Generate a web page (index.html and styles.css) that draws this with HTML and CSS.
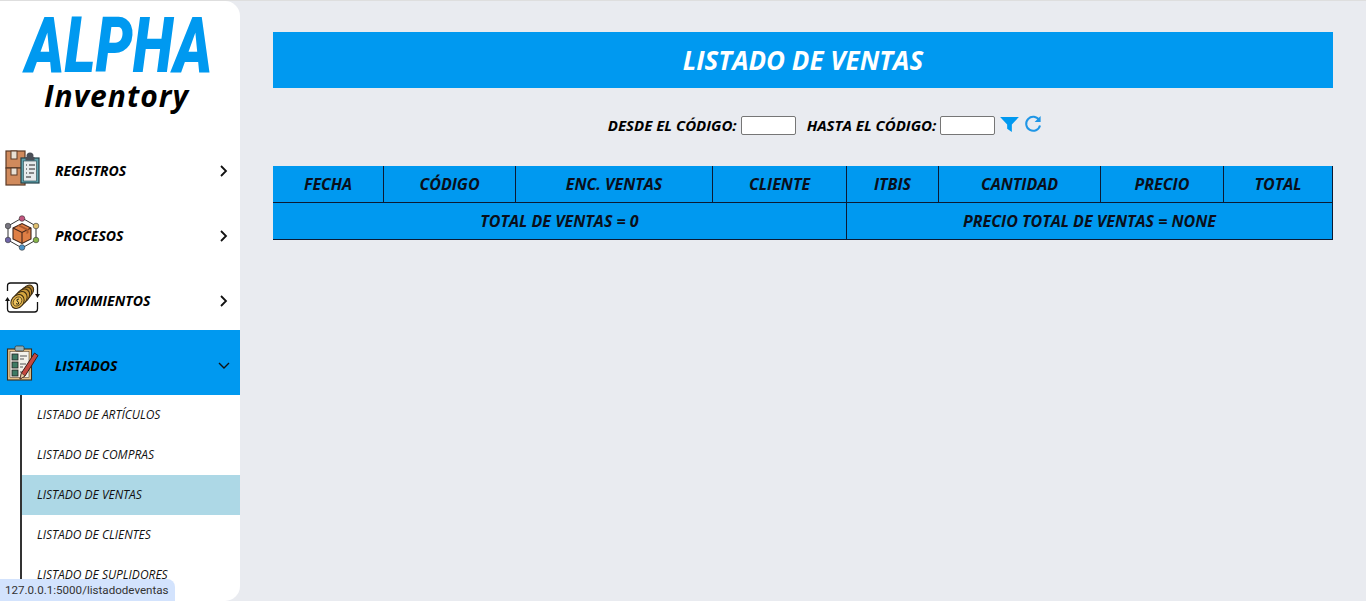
FILE: index.html
```html
<!DOCTYPE html>
<html lang="en">
<head>
  <meta charset="UTF-8">
  <title>Listado de Ventas</title>
  <link rel="stylesheet" href="styles.css">
</head>
<body>

  <aside class="sidebar">
    <div class="brand">
      <div class="brand-name">ALPHA</div>
      <div class="brand-sub">Inventory</div>
    </div>

    <div class="menu-item">
      <svg class="menu-icon" viewBox="0 0 36 36">
        <rect x="1" y="1" width="19" height="17" fill="#d08a5c" stroke="#5b3a26" stroke-width="1.2"/>
        <rect x="1" y="18" width="19" height="17" fill="#d08a5c" stroke="#5b3a26" stroke-width="1.2"/>
        <rect x="6" y="1" width="6" height="8" fill="#e8e0d4" stroke="#5b3a26"/>
        <rect x="6" y="18" width="6" height="7" fill="#e8e0d4" stroke="#5b3a26"/>
        <rect x="16" y="8" width="18" height="25" fill="#5fa3ad" stroke="#23414a" stroke-width="1.2"/>
        <rect x="18.5" y="11" width="13" height="20" fill="#e6ebec" stroke="#23414a" stroke-width=".6"/>
        <circle cx="25" cy="6" r="3.5" fill="#4b4f57"/>
        <rect x="20.5" y="7" width="9" height="3.5" fill="#4b4f57"/>
        <path d="M21 15h1M24 15h6M21 19h1M24 19h6M21 23h1M24 23h5M21 27h5" stroke="#222" stroke-width="1.1" fill="none"/>
      </svg>
      <span class="menu-label">REGISTROS</span>
      <svg class="chevron" viewBox="0 0 10 12"><path d="M2 1l5 5-5 5" /></svg>
    </div>

    <div class="menu-item">
      <svg class="menu-icon" viewBox="1 0 36 36">
        <path d="M18 3L32 11V25L18 33L4 25V11Z" fill="none" stroke="#333" stroke-width="1"/>
        <circle cx="18" cy="3.5" r="2.8" fill="#c2557f" stroke="#333" stroke-width=".6"/>
        <circle cx="32" cy="11" r="2.8" fill="#e0c070" stroke="#333" stroke-width=".6"/>
        <circle cx="32" cy="25" r="2.8" fill="#86b54a" stroke="#333" stroke-width=".6"/>
        <circle cx="18" cy="32.5" r="2.8" fill="#4b93c9" stroke="#333" stroke-width=".6"/>
        <circle cx="4" cy="25" r="2.8" fill="#6f65a8" stroke="#333" stroke-width=".6"/>
        <circle cx="4" cy="11" r="2.8" fill="#77757f" stroke="#333" stroke-width=".6"/>
        <path d="M9 13L18 8.5L27 13V24L18 28.5L9 24Z" fill="#df7f45" stroke="#40261a" stroke-width="1.1"/>
        <path d="M9 13L18 17.5L27 13M18 17.5V28.5" fill="none" stroke="#40261a" stroke-width="1.1"/>
        <path d="M13.5 10.7L22.5 15.2V19L24.5 18V14.2L15.5 9.7Z" fill="#a9582c"/>
      </svg>
      <span class="menu-label">PROCESOS</span>
      <svg class="chevron" viewBox="0 0 10 12"><path d="M2 1l5 5-5 5" /></svg>
    </div>

    <div class="menu-item">
      <svg class="menu-icon" viewBox="0 0 36 36">
        <path d="M2.5 11V6Q2.5 3 5.500 3H29.500Q32.500 3 32.500 6V14M32.500 22V29Q32.500 32 29.500 32H5.500Q2.500 32 2.500 29V20" fill="none" stroke="#111" stroke-width="1.3"/>
        <path d="M2.500 17L0 21H5ZM32.500 18L30 14H35Z" fill="#111"/>
        <ellipse cx="23" cy="11" rx="5" ry="6.500" transform="rotate(40 23 11)" fill="#a87a2c" stroke="#3a2a10"/>
        <ellipse cx="20.500" cy="13.500" rx="5.500" ry="7" transform="rotate(40 20.500 13.500)" fill="#b98a30" stroke="#3a2a10"/>
        <ellipse cx="18" cy="16" rx="6" ry="7.500" transform="rotate(40 18 16)" fill="#c8973a" stroke="#3a2a10"/>
        <ellipse cx="15.500" cy="18.500" rx="6" ry="7.500" transform="rotate(40 15.500 18.500)" fill="#d5a640" stroke="#3a2a10"/>
        <ellipse cx="12.500" cy="21.500" rx="6" ry="7.500" transform="rotate(40 12.500 21.500)" fill="#e0b24a" stroke="#3a2a10"/>
        <ellipse cx="12.500" cy="21.500" rx="3.800" ry="5" transform="rotate(40 12.500 21.500)" fill="#eec35e" stroke="#3a2a10" stroke-width=".7"/>
        <path d="M14 19Q11 19 12 21Q14.500 22 13.500 24Q12 24.500 11 23.500" fill="none" stroke="#221" stroke-width="1"/>
      </svg>
      <span class="menu-label">MOVIMIENTOS</span>
      <svg class="chevron" viewBox="0 0 10 12"><path d="M2 1l5 5-5 5" /></svg>
    </div>

    <div class="menu-item active">
      <svg class="menu-icon" viewBox="0 0 36 36">
        <rect x="2.500" y="4" width="24" height="31" fill="#e4c089" stroke="#3a2d1c" stroke-width="1.100"/>
        <rect x="5" y="6.500" width="19" height="26" fill="#f3f1ea" stroke="#3a2d1c" stroke-width=".5"/>
        <rect x="10" y="1" width="9" height="5" rx="1.500" fill="#8fb0bb" stroke="#3a2d1c" stroke-width=".7"/>
        <rect x="7" y="9" width="6" height="6" fill="#3d7a64" stroke="#222" stroke-width=".8"/>
        <rect x="7" y="17" width="6" height="6" fill="#3d7a64" stroke="#222" stroke-width=".8"/>
        <rect x="7" y="25" width="6" height="6" fill="#3d7a64" stroke="#222" stroke-width=".8"/>
        <path d="M15 11h7M15 14h4M15 19h6M15 22h3M15 27h2" stroke="#555" stroke-width="1.200" fill="none"/>
        <path d="M29.500 8L33 10.500L20 31L15 34L16.500 28Z" fill="#c4483f" stroke="#3a1d1a"/>
        <path d="M16.500 28L20 31L15 34Z" fill="#e8cfa4" stroke="#3a1d1a" stroke-width=".6"/>
      </svg>
      <span class="menu-label">LISTADOS</span>
      <svg class="chevron open" viewBox="0 0 12 10"><path d="M1 2l5 5 5-5" /></svg>
    </div>

    <div class="submenu">
      <div class="sub-item">LISTADO DE ARTÍCULOS</div>
      <div class="sub-item">LISTADO DE COMPRAS</div>
      <div class="sub-item current">LISTADO DE VENTAS</div>
      <div class="sub-item">LISTADO DE CLIENTES</div>
      <div class="sub-item">LISTADO DE SUPLIDORES</div>
    </div>
  </aside>

  <main class="content">
    <h1 class="page-title">LISTADO DE VENTAS</h1>

    <div class="filters">
      <label class="filter-label" for="desde">DESDE EL CÓDIGO:</label>
      <input class="filter-input" id="desde" type="text">
      <label class="filter-label second" for="hasta">HASTA EL CÓDIGO:</label>
      <input class="filter-input" id="hasta" type="text">
      <svg class="filter-icon" viewBox="0 0 20 16"><path d="M0 0H20L12.500 8V16L7.500 12.500V8Z"/></svg>
      <svg class="reload-icon" viewBox="0 0 18 18"><path d="M15.200 5.200A7 7 0 1 0 16 10.500"/><path class="tip" d="M16.600 1V7H10.600Z"/></svg>
    </div>

    <table class="sales-table">
      <colgroup>
        <col class="c-fecha"><col class="c-codigo"><col class="c-enc"><col class="c-cliente">
        <col class="c-itbis"><col class="c-cantidad"><col class="c-precio"><col class="c-total">
      </colgroup>
      <tr>
        <th>FECHA</th>
        <th>CÓDIGO</th>
        <th>ENC. VENTAS</th>
        <th>CLIENTE</th>
        <th>ITBIS</th>
        <th>CANTIDAD</th>
        <th>PRECIO</th>
        <th>TOTAL</th>
      </tr>
      <tr>
        <th colspan="4">TOTAL DE VENTAS = 0</th>
        <th colspan="4">PRECIO TOTAL DE VENTAS = NONE</th>
      </tr>
    </table>
  </main>

  <div class="status-link">127.0.0.1:5000/listadodeventas</div>

</body>
</html>
```

FILE: styles.css
```css
* {
  box-sizing: border-box;
}

html, body {
  height: 100%;
}

body {
  margin: 0;
  display: flex;
  overflow: hidden;
  background-color: #e9ebf0;
  border-top: 1px solid #dedede;
  font-family: 'Open Sans', sans-serif;
  color: #000;
}

/* sidebar */
.sidebar {
  width: 240px;
  flex-shrink: 0;
  height: 100%;
  overflow: hidden;
  background-color: #fff;
  border-radius: 0 15px 15px 0;
}

.brand {
  height: 134px;
  padding-top: 12px;
  padding-right: 7px;
  text-align: center;
}

.brand-name {
  height: 64px;
  margin-left: 5px;
  font-family: 'Roboto', sans-serif;
  font-size: 59px;
  font-weight: 900;
  font-style: italic;
  line-height: 64px;
  color: #0099f0;
  transform: scaleY(1.33);
}

.brand-sub {
  font-size: 30px;
  font-weight: 700;
  font-style: italic;
  line-height: 38px;
  letter-spacing: 1px;
}

.menu-item {
  display: flex;
  align-items: center;
  height: 65px;
  padding: 0 11px 0 5px;
}

.menu-item.active {
  background-color: #0099f0;
}

.menu-icon {
  width: 36px;
  height: 36px;
  flex-shrink: 0;
  margin-right: 14px;
}

.menu-label {
  flex: 1;
  padding-top: 5px;
  font-size: 14px;
  font-weight: 700;
  font-style: italic;
}

.chevron {
  width: 10px;
  height: 12px;
  margin-top: 7px;
  fill: none;
  stroke: #111;
  stroke-width: 1.8;
}

.chevron.open {
  width: 12px;
  height: 10px;
  margin-right: -1px;
  stroke-width: 1.4;
}

.submenu {
  margin-left: 20px;
  border-left: 2px solid #333;
}

.sub-item {
  height: 40px;
  padding-left: 15px;
  font-size: 12px;
  font-style: italic;
  line-height: 39px;
  color: #111;
}

.sub-item.current {
  background-color: #add8e6;
}

/* main area */
.content {
  flex: 1;
  padding: 31px 33px 0;
}

.page-title {
  margin: 0;
  height: 56px;
  background-color: #0099f0;
  color: #fff;
  font-size: 26px;
  font-style: italic;
  font-weight: 700;
  line-height: 56px;
  text-align: center;
}

.filters {
  display: flex;
  align-items: center;
  justify-content: center;
  height: 19px;
  margin-top: 28px;
  padding-left: 44px;
}

.filter-label {
  font-size: 15px;
  font-weight: 700;
  font-style: italic;
  position: relative;
  top: -1px;
}

.filter-label.second {
  margin-left: 11px;
}

.filter-input {
  width: 55px;
  height: 19px;
  margin: 0 0 0 4px;
  padding: 0;
  background-color: #fff;
  border: 1px solid #767676;
  border-radius: 2px;
}

.filter-icon {
  width: 19px;
  height: 15px;
  margin-left: 5px;
  margin-top: -3px;
  fill: #0099f0;
}

.reload-icon {
  width: 18px;
  height: 18px;
  margin-left: 5px;
  margin-top: -3px;
  fill: none;
  stroke: #1f96e6;
  stroke-width: 2;
}

.reload-icon .tip {
  fill: #1f96e6;
  stroke: none;
}

.sales-table {
  width: 100%;
  margin-top: 31px;
  table-layout: fixed;
  border-collapse: separate;
  border-spacing: 0;
  background-color: #0099f0;
}

.sales-table th {
  height: 37px;
  padding: 0;
  border-right: 1px solid #0b1a33;
  border-bottom: 1px solid #0b1a33;
  font-size: 16px;
  font-style: italic;
  font-weight: 700;
  text-align: center;
  color: #0a0f1a;
}

.c-fecha { width: 111px; }
.c-codigo { width: 132px; }
.c-enc { width: 197px; }
.c-cliente { width: 134px; }
.c-itbis { width: 92px; }
.c-cantidad { width: 162px; }
.c-precio { width: 123px; }
.c-total { width: 109px; }

/* browser link preview in the corner */
.status-link {
  position: absolute;
  left: 0;
  bottom: 0;
  width: 175px;
  height: 22px;
  padding-left: 5px;
  background-color: #d3e3fd;
  border-radius: 0 8px 0 0;
  font-family: 'Roboto', sans-serif;
  font-size: 11.6px;
  line-height: 22px;
  color: #333;
  white-space: nowrap;
}
```
